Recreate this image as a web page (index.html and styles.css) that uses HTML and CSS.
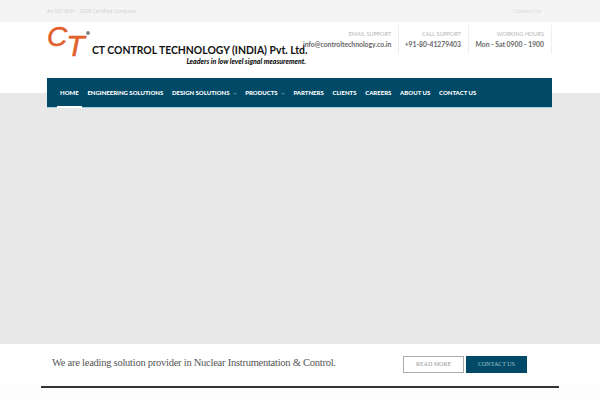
FILE: index.html
```html
<!DOCTYPE html>
<html lang="en">
<head>
    <meta charset="UTF-8">
    <meta name="viewport" content="width=device-width, initial-scale=1.0">
    <title>CT Control Technology</title>
    <link rel="stylesheet" href="styles.css">
</head>
<body>
    <div class="topbar">
        <div class="wrap topbar-inner">
            <span>An ISO 9001 : 2008 Certified Company</span>
            <a href="#" class="topbar-link">Contact Us</a>
        </div>
    </div>

    <header class="header">
        <div class="wrap header-inner">
            <div class="logo">
                <div class="logo-mark">
                    <span class="logo-c">C</span><span class="logo-t">T</span><span class="logo-reg"></span>
                </div>
                <div class="logo-text">
                    <div class="logo-name">CT CONTROL TECHNOLOGY (INDIA) Pvt. Ltd.</div>
                    <div class="logo-tag">Leaders in low level signal measurement.</div>
                </div>
            </div>
            <div class="contacts">
                <div class="contact">
                    <div class="contact-label">EMAIL SUPPORT</div>
                    <div class="contact-value">info@controltechnology.co.in</div>
                </div>
                <div class="contact">
                    <div class="contact-label">CALL SUPPORT</div>
                    <div class="contact-value">+91-80-41279403</div>
                </div>
                <div class="contact">
                    <div class="contact-label">WORKING HOURS</div>
                    <div class="contact-value">Mon - Sat 0900 - 1900</div>
                </div>
            </div>
        </div>
        <nav class="nav wrap">
            <a href="#" class="nav-item active">HOME</a>
            <a href="#" class="nav-item">ENGINEERING SOLUTIONS</a>
            <a href="#" class="nav-item">DESIGN SOLUTIONS<svg class="chev" viewBox="0 0 8 5"><path d="M1 1l3 3 3-3"/></svg></a>
            <a href="#" class="nav-item">PRODUCTS<svg class="chev" viewBox="0 0 8 5"><path d="M1 1l3 3 3-3"/></svg></a>
            <a href="#" class="nav-item">PARTNERS</a>
            <a href="#" class="nav-item">CLIENTS</a>
            <a href="#" class="nav-item">CAREERS</a>
            <a href="#" class="nav-item">ABOUT US</a>
            <a href="#" class="nav-item">CONTACT US</a>
        </nav>
    </header>

    <div class="hero"></div>

    <section class="cta">
        <p class="cta-text">We are leading solution provider in Nuclear Instrumentation &amp; Control.</p>
        <div class="cta-buttons">
            <a href="#" class="btn btn-light">READ MORE</a>
            <a href="#" class="btn btn-dark">CONTACT US</a>
        </div>
    </section>

    <div class="footer-line"></div>
</body>
</html>
```

FILE: styles.css
```css
html, body { margin: 0; padding: 0; }
body { font-family: "Noto Sans", Arial, sans-serif; background: #fdfdfd; height: 400px; overflow: hidden; }
a { text-decoration: none; }
.wrap { width: 505px; margin-left: 47px; box-sizing: border-box; }

.topbar { background: #f4f4f4; height: 22px; }
.topbar-inner { display: flex; justify-content: space-between; align-items: center; height: 21px; font-size: 5px; color: #d2d2d2; }
.topbar-link { color: #d8d8d8; margin-right: 11px; font-size: 5.5px; }

.header { background: #fff; height: 71px; }
.header-inner { display: flex; justify-content: space-between; height: 56px; }

.logo { display: flex; flex: 0 0 250px; min-width: 0; font-family: Lato, sans-serif; color: #111; white-space: nowrap; }
.logo-mark { display: flex; width: 45px; flex-shrink: 0; font-family: "Liberation Sans", sans-serif; font-style: italic; color: #e2602c; -webkit-text-stroke: 0.5px #e2602c; }
.logo-c { font-size: 28px; line-height: 28px; margin-top: 1px; }
.logo-t { font-size: 30px; line-height: 30px; margin-top: 9px; margin-left: -1px; }
.logo-reg { width: 4px; height: 4px; border-radius: 50%; background: #7d8a8c; margin: 9px 0 0 1px; }
.logo-name { font-size: 10.4px; font-weight: 700; line-height: 14px; margin-top: 21px; }
.logo-tag { font-size: 7px; font-weight: 900; font-style: italic; text-align: right; line-height: 8px; width: 214px; }

.contacts { display: grid; grid-template-columns: 96px 70px 83px; }
.contact { height: 25px; padding: 4px 7px 0 0; margin-top: 3px; border-right: 1px solid #eee; text-align: right; }
.contact-label { font-family: Lato, sans-serif; font-size: 5.5px; line-height: 10px; color: #b5b5b5; }
.contact-value { font-family: Lato, sans-serif; font-size: 6.8px; line-height: 11px; color: #666; white-space: nowrap; font-weight: 700; }

.nav { position: relative; display: flex; align-items: center; height: 30px; background: #004a68; padding-left: 13px; gap: 8.75px; border-bottom: 1px solid #9fd0dc; }
.nav-item { position: relative; font-family: Lato, sans-serif; font-size: 6px; font-weight: 900; color: #fff; white-space: nowrap; line-height: 29px; }
.nav-item.active::after { content: ""; position: absolute; left: -3px; right: -3px; bottom: -1px; height: 2px; background: #fff; }
.chev { width: 4px; height: 3px; margin-left: 3px; vertical-align: middle; fill: none; stroke: #cfdde3; stroke-width: 1; }

.hero { background: #e8e8e8; height: 251px; }

.cta { display: flex; justify-content: space-between; align-items: center; background: #fff; height: 41px; padding: 0 73px 0 52px; }
.cta-text { margin: 0 0 4px; font-family: "Liberation Serif", serif; font-size: 10.5px; letter-spacing: -0.25px; color: #555; }
.cta-buttons { display: flex; gap: 2px; }
.btn { box-sizing: border-box; display: block; height: 17px; line-height: 15px; text-align: center; font-family: "Liberation Serif", serif; font-size: 6px; }
.btn-light { width: 61px; border: 1px solid #aaa; color: #999; }
.btn-dark { width: 61px; background: #004a68; border: 1px solid #004a68; color: #a8c4d0; }

.footer-line { width: 518px; height: 2px; margin: 1px 0 0 41px; background: #333; }
```
